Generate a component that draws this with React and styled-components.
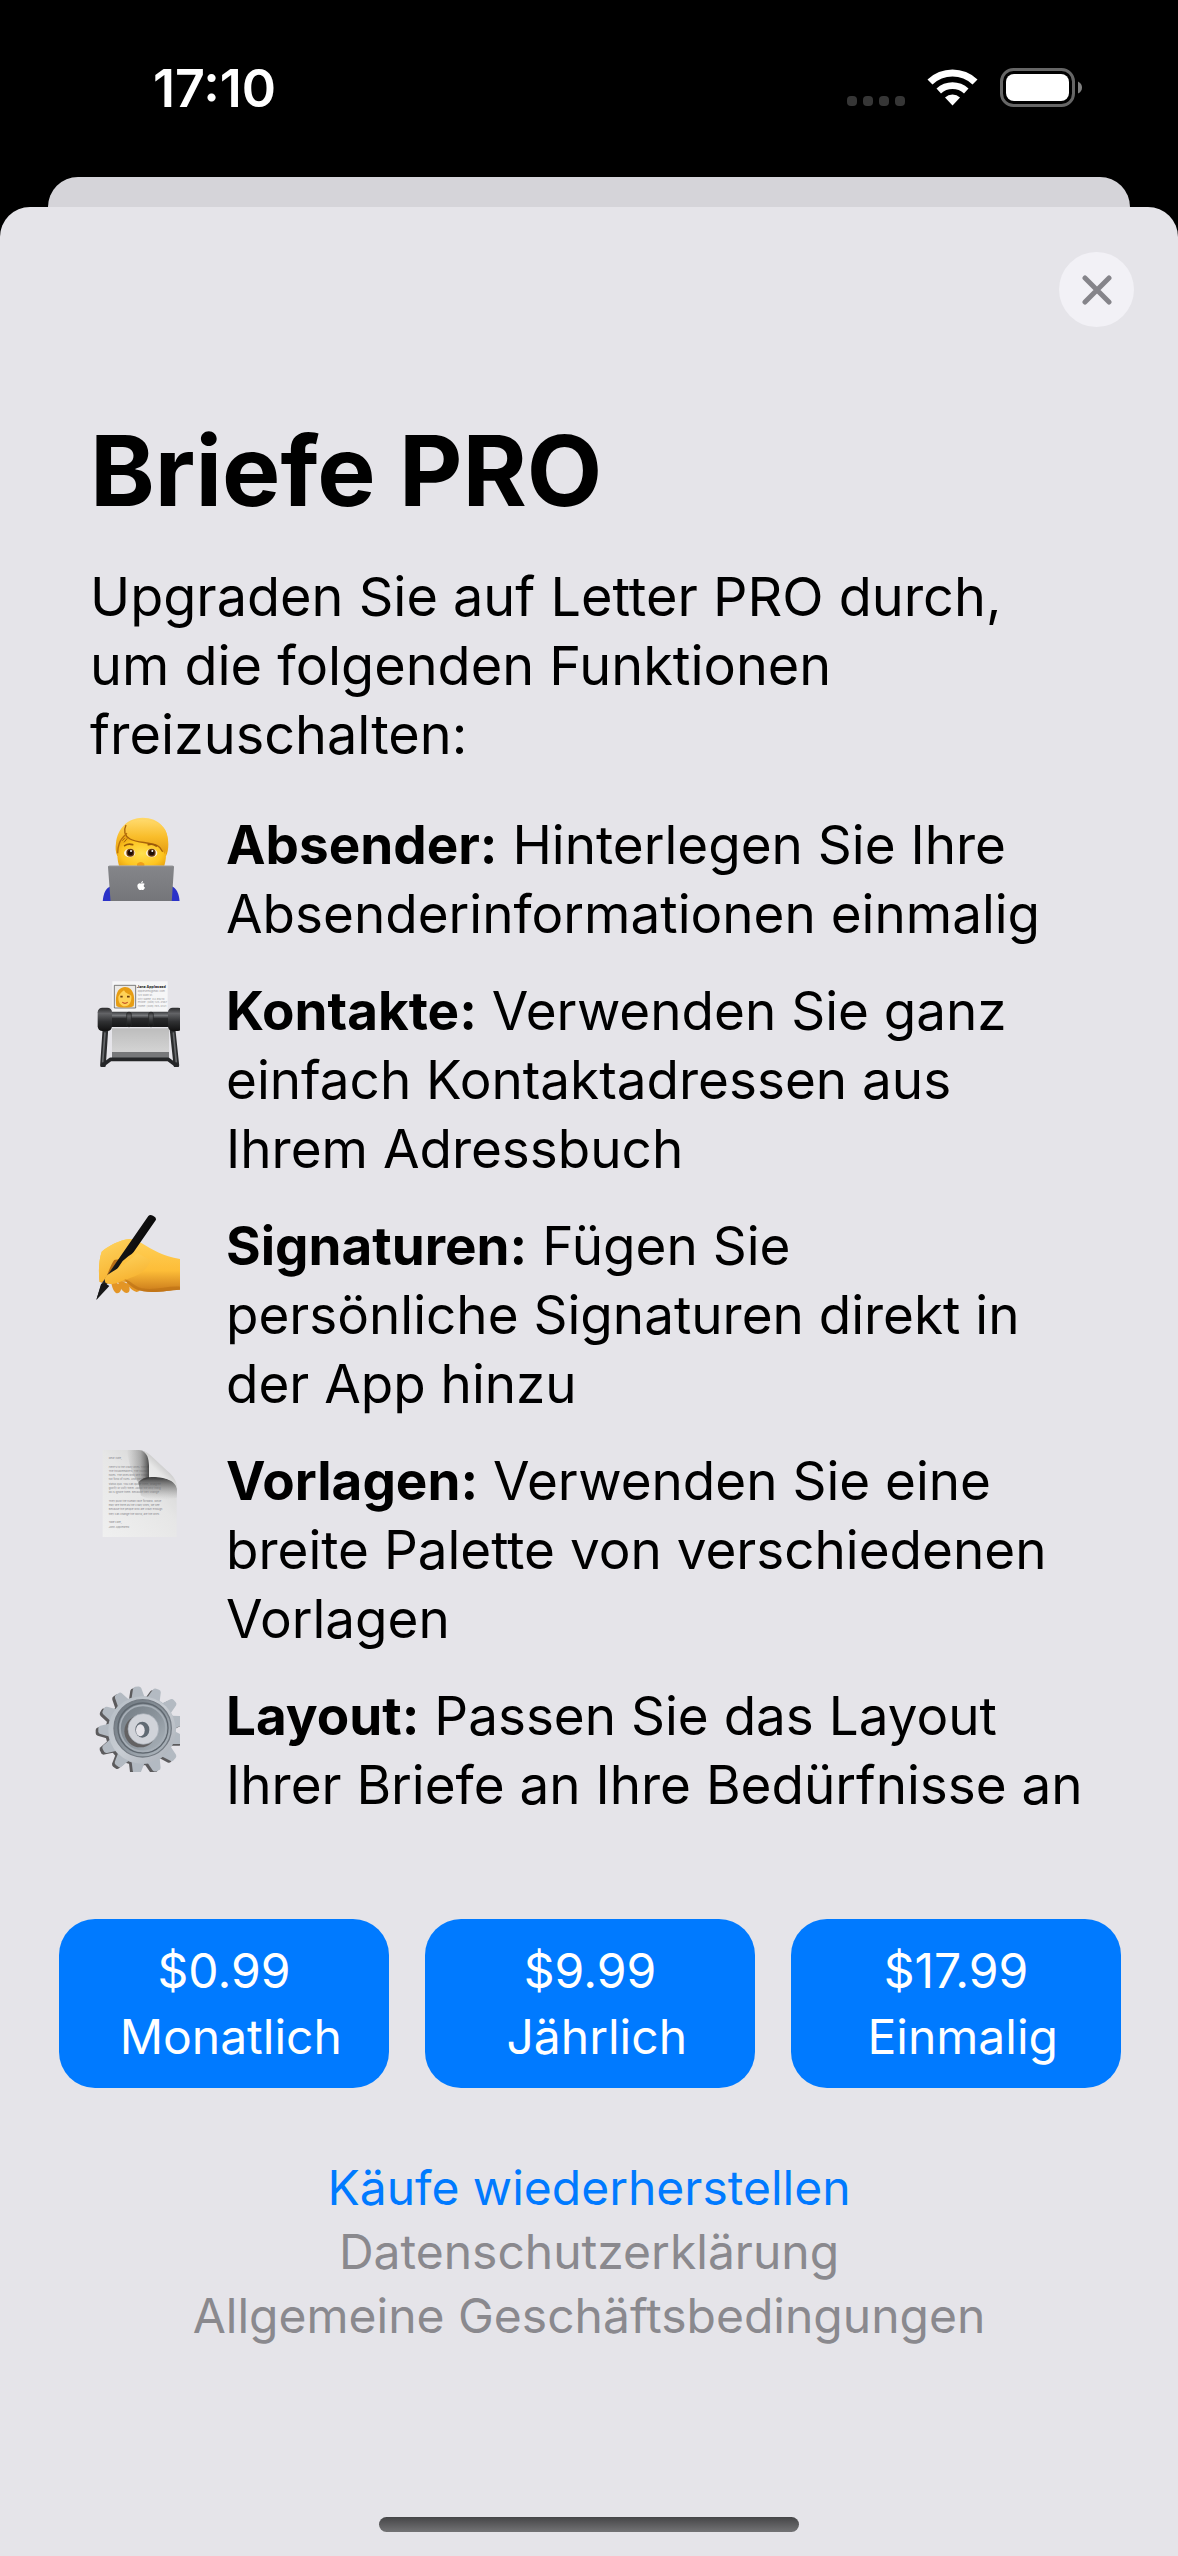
import React from "react";
import styled, { createGlobalStyle } from "styled-components";
import { FaApple } from "react-icons/fa";

const GlobalStyle = createGlobalStyle`
  *, *::before, *::after { box-sizing: border-box; }
  body {
    margin: 0;
    background: #000;
    font-family: Inter, "Liberation Sans", sans-serif;
    color: #000;
  }
`;

const Screen = styled.div`
  display: flex;
  flex-direction: column;
  min-height: 100vh;
`;

const StatusBar = styled.header`
  display: flex;
  align-items: center;
  justify-content: space-between;
  height: 177px;
  padding: 0 96px 0 153px;
  color: #fff;
`;

const Clock = styled.time`
  font-size: 52px;
  line-height: 60px;
  font-weight: 600;
`;

const StatusIcons = styled.svg`
  width: 240px;
  height: 48px;
`;

const SheetBehind = styled.div`
  height: 30px;
  margin: 0 48px;
  border-radius: 30px 30px 0 0;
  background: #d5d4d9;
`;

const Sheet = styled.main`
  flex: 1;
  display: flex;
  flex-direction: column;
  padding: 45px 44px 24px;
  border-radius: 30px 30px 0 0;
  background: #e5e4e9;
`;

const CloseButton = styled.button`
  align-self: flex-end;
  display: grid;
  place-items: center;
  width: 75px;
  height: 75px;
  padding: 0;
  border: 0;
  border-radius: 50%;
  background: #f2f1f6;
  color: #85848a;
`;

const Content = styled.section`
  padding: 82px 44px 0 46px;
`;

const Title = styled.h1`
  margin: 0;
  font-size: 98px;
  line-height: 124px;
  font-weight: 700;
`;

const Intro = styled.p`
  margin: 29px 0 42px;
  max-width: 960px;
  font-size: 54px;
  line-height: 69px;
`;

const Features = styled.ul`
  display: flex;
  flex-direction: column;
  gap: 28px;
  margin: 0;
  padding: 0;
  list-style: none;
`;

const Feature = styled.li`
  display: grid;
  grid-template-columns: 90px 1fr;
  column-gap: 46px;
  font-size: 53px;
  line-height: 69px;

  strong { font-weight: 700; }
`;

const Emoji = styled.svg`
  width: 90px;
  height: 90px;
`;

const Plans = styled.div`
  display: grid;
  grid-template-columns: repeat(3, 1fr);
  gap: 36px;
  margin: 99px 0 68px;
  padding: 0 13px 0 15px;
`;

const PlanButton = styled.button`
  display: flex;
  flex-direction: column;
  align-items: center;
  justify-content: center;
  height: 169px;
  padding: 0;
  border: 0;
  border-radius: 36px;
  background: #007aff;
  color: #fff;
  font: 400 48px/66px Inter, "Liberation Sans", sans-serif;
  white-space: pre;
`;

const Links = styled.nav`
  display: flex;
  flex-direction: column;
  align-items: center;
`;

const FooterLink = styled.a`
  font-size: 48px;
  line-height: 64px;
  color: ${(p) => (p.$accent ? "#007aff" : "#8a898e")};
  text-decoration: none;
`;

const HomeIndicator = styled.div`
  align-self: center;
  width: 420px;
  height: 15px;
  margin-top: auto;
  border-radius: 8px;
  background: linear-gradient(#454547, #737375);
`;

const Technologist = () => (
  <Emoji viewBox="30 30 270 270" aria-hidden="true">
    <defs>
      <linearGradient id="hair" x1="0" y1="0" x2="0" y2="1">
        <stop offset="0" stopColor="#ffd96a" />
        <stop offset=".5" stopColor="#f9bd2a" />
        <stop offset="1" stopColor="#e39a10" />
      </linearGradient>
      <radialGradient id="face" cx=".5" cy=".6" r=".6">
        <stop offset="0" stopColor="#ffe04f" />
        <stop offset=".7" stopColor="#fdc521" />
        <stop offset="1" stopColor="#eaa410" />
      </radialGradient>
      <linearGradient id="lid" x1="0" y1="0" x2="0" y2="1">
        <stop offset="0" stopColor="#85868a" />
        <stop offset="1" stopColor="#737478" />
      </linearGradient>
    </defs>
    <path d="M68 309c0-27 8-48 25-53h182c16 6 24 26 24 53z" fill="#2b32c8" />
    <path d="M112 165c-6-12-6-26-4-39 4-42 34-76 80-76 50 0 78 36 77 80 0 14-2 26-7 35z" fill="url(#hair)" />
    <path d="M117 194c-5-16-6-34-4-50q2-12 8-18l18-24c22 16 58 24 90 20q18 4 28 24c2 18 1 32-4 48z" fill="url(#face)" />
    <path d="M141 68c-10 16-9 33 5 43 24 17 60 10 87 24 9 6 16 14 21 24 9-20 13-52 2-72-18-33-90-39-115-19z" fill="url(#hair)" />
    <path d="M138 72c-8 18-4 33 12 42 24 13 56 8 82 20q10 5 16 18" fill="none" stroke="#a9640b" strokeWidth="4" />
    <path d="M141 97c-10 9-19 18-23 30q-5 14-5 30" fill="none" stroke="#b7700b" strokeWidth="4" />
    <path d="M127 119l7-8M132 124l10-12" stroke="#a9640b" strokeWidth="3" />
    <path d="M134 134q10-7 24-3M205 131q14-4 24 4" fill="none" stroke="#9a5a0b" strokeWidth="5" strokeLinecap="round" />
    <ellipse cx="149" cy="156" rx="17" ry="13" fill="#fff4d9" />
    <ellipse cx="215" cy="156" rx="17" ry="13" fill="#fff4d9" />
    <circle cx="151" cy="155" r="12" fill="#6d3b10" />
    <circle cx="215" cy="155" r="12" fill="#6d3b10" />
    <circle cx="151" cy="155" r="8" fill="#1d0d04" />
    <circle cx="215" cy="155" r="8" fill="#1d0d04" />
    <circle cx="153" cy="150" r="3" fill="#fff" />
    <circle cx="217" cy="150" r="3" fill="#fff" />
    <path d="M171 188q11-10 22 0v7h-22z" fill="#ee9d18" />
    <path d="M88 194h190q4 0 4 4l-7 107q0 4-4 4H96q-4 0-4-4l-8-107q0-4 4-4z" fill="url(#lid)" />
    <path d="M88 195h190" stroke="#a3a4a8" strokeWidth="2" />
    <path d="M93 307h181" stroke="#56575b" strokeWidth="3" />
    <FaApple x="168" y="238" size={31} color="#fff" />
  </Emoji>
);

const CardIndex = () => (
  <Emoji viewBox="30 30 270 270" aria-hidden="true">
    <defs>
      <linearGradient id="bar" x1="0" y1="0" x2="0" y2="1">
        <stop offset="0" stopColor="#3c3d40" />
        <stop offset=".25" stopColor="#77797c" />
        <stop offset=".45" stopColor="#2a2b2d" />
        <stop offset="1" stopColor="#161617" />
      </linearGradient>
      <linearGradient id="knob" x1="0" y1="0" x2="0" y2="1">
        <stop offset="0" stopColor="#29292b" />
        <stop offset=".25" stopColor="#626366" />
        <stop offset=".6" stopColor="#303133" />
        <stop offset="1" stopColor="#111" />
      </linearGradient>
      <linearGradient id="stack" x1="0" y1="0" x2="0" y2="1">
        <stop offset="0" stopColor="#bdbdbd" />
        <stop offset="1" stopColor="#d4d4d4" />
      </linearGradient>
    </defs>
    <path d="M97 43h166v94H97z" fill="#f6f6f7" />
    <path d="M103 55h64v68h-64z" fill="#eceae7" stroke="#444" strokeWidth="2" />
    <path d="M109 117c-3-20-3-55 26-57 28 1 30 34 26 57-9 6-43 6-52 0z" fill="#e79d13" />
    <path d="M115 89c4-8 10-15 17-19 4 9 15 12 22 16 2 17-6 31-19 32-14-1-21-13-20-29z" fill="#ffd257" />
    <path d="M121 89h7M141 89h8" stroke="#6b3c0c" strokeWidth="5" />
    <path d="M127 106q8 6 16 0" fill="none" stroke="#c65226" strokeWidth="4" />
    <g fontFamily="Inter, sans-serif" fill="#96969a">
      <text x="171" y="63" fontSize="11" fontWeight="700" fill="#1b1b1c">Jane Appleseed</text>
      <text x="173" y="76" fontSize="8">appleseed@mac.com</text>
      <text x="173" y="87" fontSize="8">123 Main St.</text>
      <text x="173" y="98" fontSize="8">City Name, CA 90210</text>
      <text x="173" y="109" fontSize="8">Phone: (408) 123-4567</text>
      <text x="173" y="121" fontSize="8">Home: (408) 765-4321</text>
    </g>
    <path d="M96 184h171v72H96z" fill="url(#stack)" />
    <path d="M96 255h171v23H96z" fill="#77787a" />
    <path d="M76 190L69 294M278 190l11 104" stroke="#2a2b2d" strokeWidth="17" strokeLinecap="round" />
    <path d="M75 196L68 286M280 196l9 90" stroke="#66686b" strokeWidth="5" />
    <path d="M68 295l24-18h172l26 19" fill="none" stroke="#252628" strokeWidth="11" strokeLinejoin="round" strokeLinecap="round" />
    <path d="M90 134h180v46H90z" fill="url(#bar)" />
    <rect x="53" y="122" width="43" height="70" rx="14" fill="url(#knob)" />
    <rect x="264" y="122" width="44" height="70" rx="14" fill="url(#knob)" />
    <rect x="140" y="136" width="14" height="43" rx="5" fill="url(#knob)" stroke="#242527" strokeWidth="2" />
    <rect x="206" y="136" width="14" height="43" rx="5" fill="url(#knob)" stroke="#242527" strokeWidth="2" />
  </Emoji>
);

const WritingHand = () => (
  <Emoji viewBox="30 30 270 270" aria-hidden="true">
    <defs>
      <linearGradient id="hand" x1="0" y1="0" x2="0" y2="1">
        <stop offset="0" stopColor="#ffd159" />
        <stop offset=".6" stopColor="#fdbd38" />
        <stop offset="1" stopColor="#c9791a" />
      </linearGradient>
      <linearGradient id="thumb" x1="0" y1="0" x2=".4" y2="1">
        <stop offset="0" stopColor="#ffd662" />
        <stop offset="1" stopColor="#f7b22f" />
      </linearGradient>
      <linearGradient id="pen" x1="0" y1="0" x2="1" y2=".6">
        <stop offset=".3" stopColor="#59595b" />
        <stop offset=".5" stopColor="#151516" />
        <stop offset="1" stopColor="#000" />
      </linearGradient>
    </defs>
    <path d="M92 232c2 18 7 34 16 41 12 4 20-12 12-24zM112 230c4 22 14 39 27 43 12 0 13-16 4-28zM136 228c5 22 18 38 34 42 14-1 13-16 4-26z" fill="#e39525" />
    <path d="M59 240c-4-30-3-64 6-91 19-16 54-36 84-38 20-1 27 8 35 12 34 20 64 40 116 48v92c-30 1-49 7-85 7-36 0-58-10-75-30l-64-6-10 8z" fill="url(#hand)" />
    <path d="M80 220c-3-20 3-40 19-46l30-4-36 52z" fill="#b86e16" />
    <path d="M59 240c-4-30-3-64 6-91 19-16 54-36 84-38l24 10c-8 22-40 38-69 51-12 17-20 42-31 65z" fill="url(#thumb)" />
    <path d="M205 42q5-6 14-1 12 6 8 14l-66 95q-6 8-16 13l-17 14-79 116 15-47z" fill="url(#pen)" />
    <path d="M49 294l14-47q12-7 25 5z" fill="#171718" />
    <path d="M77 243c-8-15 3-24 20-34 26-13 54-35 75-55l40 20c-10 28-30 44-60 53-25 9-56 26-75 16z" fill="url(#thumb)" />
    <path d="M133 231c22 6 28 22 53 28 37 7 74-7 114-5v9c-30 1-49 7-85 7-36 0-64-12-82-39z" fill="#bd7116" opacity=".65" />
  </Emoji>
);

const letterLines = [
  [93, "Here's to the crazy ones. The misfits. The"],
  [106, "The troublemakers. The round pegs in the"],
  [118, "holes. The ones who see things differently."],
  [130, "not fond of rules. And they have no respect"],
  [143, "status quo. You can quote them, disagree"],
  [155, "glorify or vilify them. About the only thing"],
  [168, "do is ignore them. Because they change"],
  [194, "They push the human race forward. While"],
  [207, "may see them as the crazy ones, we see"],
  [220, "Because the people who are crazy enough"],
  [233, "they can change the world, are the ones"],
];

const PageCurl = () => (
  <Emoji viewBox="30 30 270 270" aria-hidden="true">
    <defs>
      <linearGradient id="paper" x1="0" y1="1" x2=".8" y2="0">
        <stop offset="0" stopColor="#f0f0f0" />
        <stop offset=".6" stopColor="#e6e6e6" />
        <stop offset="1" stopColor="#cfcfcf" />
      </linearGradient>
      <linearGradient id="shadeLeft" x1="0" y1="0" x2="1" y2="0">
        <stop offset="0" stopColor="#888" stopOpacity="0" />
        <stop offset=".6" stopColor="#777" stopOpacity=".5" />
        <stop offset="1" stopColor="#3a3a3a" stopOpacity=".95" />
      </linearGradient>
      <linearGradient id="shadeBelow" x1="0" y1="0" x2="0" y2="1">
        <stop offset="0" stopColor="#333" stopOpacity=".95" />
        <stop offset=".4" stopColor="#666" stopOpacity=".65" />
        <stop offset="1" stopColor="#999" stopOpacity="0" />
      </linearGradient>
      <linearGradient id="curl" x1="0" y1="1" x2=".6" y2=".3">
        <stop offset="0" stopColor="#f4f4f4" />
        <stop offset=".7" stopColor="#e6e6e6" />
        <stop offset="1" stopColor="#c4c4c4" />
      </linearGradient>
    </defs>
    <path d="M68 39h108c18 2 30 10 48 34 22 24 56 48 66 76v153H68z" fill="url(#paper)" />
    <g fontFamily="Inter, sans-serif" fontSize="8" fill="#85858a">
      <text x="86" y="65">Dear Kate,</text>
      {letterLines.map(([y, line]) => (
        <text key={y} x="86" y={y}>{line}</text>
      ))}
      <text x="86" y="259">Take care,</text>
      <text x="86" y="272">John Appleseed</text>
    </g>
    <path d="M140 39h36c15 1 24 8 33 20v63l-34 14c-20-20-28-60-35-97z" fill="url(#shadeLeft)" />
    <path d="M175 136c8-10 20-15 34-16 34-2 78 4 82 34v28c-40 6-80 10-108-6z" fill="url(#shadeBelow)" />
    <path d="M186 41c16 8 20 22 21 44v36c30-3 80 4 84 36 2-22-11-40-28-54l-45-42c-10-11-19-18-32-20z" fill="url(#curl)" />
  </Emoji>
);

const TEETH = 13;

const Gear = () => (
  <Emoji viewBox="30 30 270 270" aria-hidden="true">
    <defs>
      <linearGradient id="steel" x1="0" y1="0" x2="1" y2="1">
        <stop offset="0" stopColor="#b3bbc3" />
        <stop offset=".5" stopColor="#c8cdd3" />
        <stop offset="1" stopColor="#a9afb7" />
      </linearGradient>
      <linearGradient id="dish" x1="0" y1="0" x2="1" y2="1">
        <stop offset="0" stopColor="#6b747c" />
        <stop offset=".55" stopColor="#8e979f" />
        <stop offset="1" stopColor="#b6bec5" />
      </linearGradient>
    </defs>
    {[
      [-8, 5, "#5c5b5d"],
      [0, 0, "#b3bac2"],
    ].map(([dx, dy, tone]) => (
      <g key={tone} transform={`translate(${186 + dx} ${174 + dy})`} fill={tone}>
        <circle r="102" />
        {Array.from({ length: TEETH }, (_, i) => (
          <path
            key={i}
            d="M-20-96L-12-125q2-6 8-6H5q6 0 8 6L20-96z"
            transform={`rotate(${(i * 360) / TEETH - 7})`}
          />
        ))}
      </g>
    ))}
    <circle cx="186" cy="174" r="101" fill="url(#steel)" />
    <circle cx="188" cy="169" r="86" fill="url(#dish)" stroke="#747b83" strokeWidth="4" />
    <circle cx="189" cy="168" r="75" fill="none" stroke="#5f676f" strokeWidth="4" />
    <circle cx="189" cy="169" r="69" fill="none" stroke="#a7afb7" strokeWidth="5" />
    <circle cx="181" cy="178" r="48" fill="#636263" />
    <circle cx="190" cy="171" r="46" fill="#d0d3d9" stroke="#a6adb6" strokeWidth="2" />
    <ellipse cx="187" cy="173" rx="21" ry="24" fill="#606a73" />
    <ellipse cx="181" cy="175" rx="13" ry="18" fill="#e5e4e9" />
  </Emoji>
);

const features = [
  { icon: Technologist, name: "Absender:", text: "Hinterlegen Sie Ihre Absenderinformationen einmalig" },
  { icon: CardIndex, name: "Kontakte:", text: "Verwenden Sie ganz einfach Kontaktadressen aus Ihrem Adressbuch" },
  { icon: WritingHand, name: "Signaturen:", text: "Fügen Sie persönliche Signaturen direkt in der App hinzu" },
  { icon: PageCurl, name: "Vorlagen:", text: "Verwenden Sie eine breite Palette von verschiedenen Vorlagen" },
  { icon: Gear, name: "Layout:", text: "Passen Sie das Layout Ihrer Briefe an Ihre Bedürfnisse an" },
];

const plans = [
  { price: "$0.99", period: "Monatlich" },
  { price: "$9.99", period: "Jährlich" },
  { price: "$17.99", period: "Einmalig" },
];

export default function App() {
  return (
    <Screen>
      <GlobalStyle />
      <StatusBar>
        <Clock>17:10</Clock>
        <StatusIcons viewBox="0 0 240 48" aria-hidden="true">
          {[4, 20, 36, 52].map((x) => (
            <rect key={x} x={x + 1} y="31" width="10" height="10" rx="4" fill="#363636" />
          ))}
          <g fill="#fff">
            <path d="M85.500 14.500a36 36 0 0 1 50 0l-5 5a29 29 0 0 0-40 0z" />
            <path d="M94.500 23.500a23.500 23.500 0 0 1 32 0l-4.500 5a17 17 0 0 0-23 0z" />
            <path d="M103 32.500a11 11 0 0 1 15 0l-7.500 8z" />
          </g>
          <rect x="159.500" y="4.500" width="72" height="36" rx="12" fill="none" stroke="#666" strokeWidth="3" />
          <rect x="164" y="9" width="63" height="27" rx="8" fill="#fff" />
          <path d="M236 16.500q4 2 4 6t-4 6z" fill="#808080" />
        </StatusIcons>
      </StatusBar>
      <SheetBehind />
      <Sheet>
        <CloseButton type="button" aria-label="Schließen">
          <svg width="30" height="30" viewBox="0 0 30 30" fill="none" stroke="currentColor" strokeWidth="5" strokeLinecap="round">
            <path d="M3 3l24 24M27 3L3 27" />
          </svg>
        </CloseButton>
        <Content>
          <Title>Briefe PRO</Title>
          <Intro>Upgraden Sie auf Letter PRO durch, um die folgenden Funktionen freizuschalten:</Intro>
          <Features>
            {features.map(({ icon: Icon, name, text }) => (
              <Feature key={name}>
                <Icon />
                <span>
                  <strong>{name}</strong> {text}
                </span>
              </Feature>
            ))}
          </Features>
        </Content>
        <Plans>
          {plans.map(({ price, period }) => (
            <PlanButton key={period} type="button">
              <span>{price}</span>
              <span>{` ${period}`}</span>
            </PlanButton>
          ))}
        </Plans>
        <Links>
          <FooterLink href="#restore" $accent>Käufe wiederherstellen</FooterLink>
          <FooterLink href="#privacy">Datenschutzerklärung</FooterLink>
          <FooterLink href="#terms">Allgemeine Geschäftsbedingungen</FooterLink>
        </Links>
        <HomeIndicator />
      </Sheet>
    </Screen>
  );
}
